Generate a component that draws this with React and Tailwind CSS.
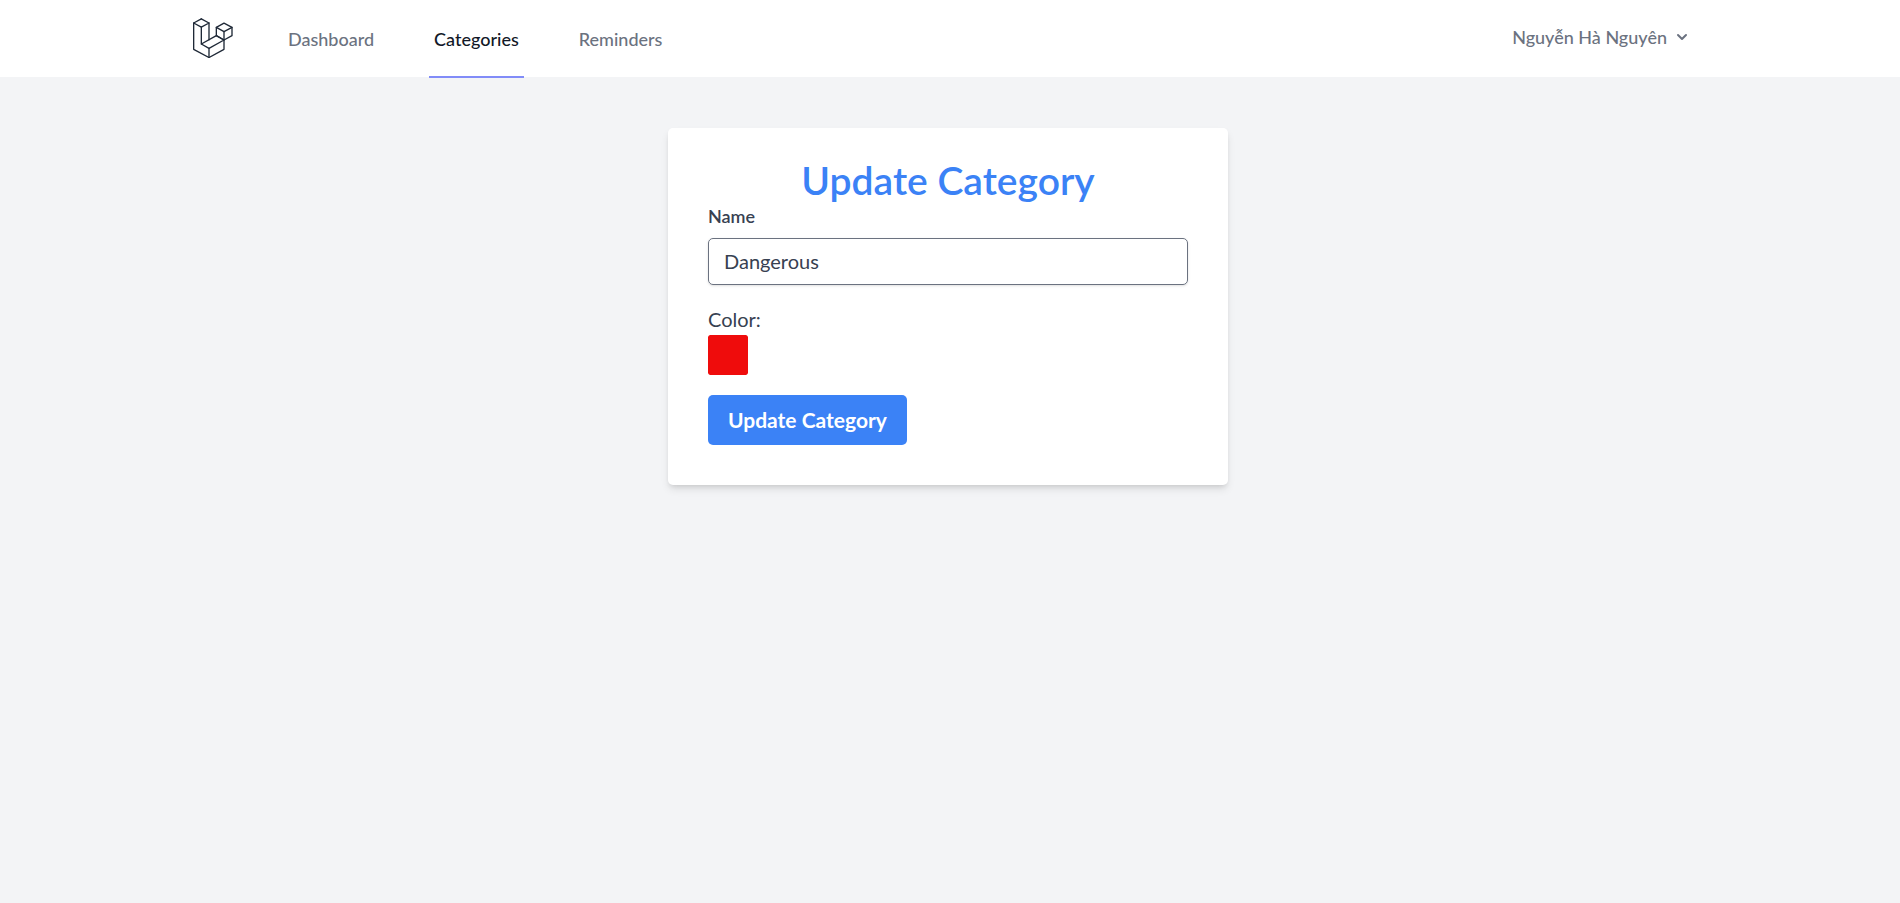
import React, { useState } from "react";

const links = [
  { label: "Dashboard", href: "#dashboard" },
  { label: "Categories", href: "#categories", active: true },
  { label: "Reminders", href: "#reminders" },
];

function Logo() {
  return (
    <svg
      viewBox="38 52 120 120"
      className="size-10 text-[#1f2937]"
      fill="none"
      stroke="currentColor"
      strokeWidth="4"
      strokeLinejoin="round"
      strokeLinecap="round"
      aria-hidden="true"
    >
      <path d="M63 54.5 40 67v79l46 24.500 45-24.500V93" />
      <path d="M40 67l23 12.500L86 67 63 54.500" />
      <path d="M63 79.500V130l23 13v27.500" />
      <path d="M86 67v50.500" />
      <path d="M63 130l45-25 23 13-45 25" />
      <path d="M131 67.500 108 80v25l23 13 24-13V80z" />
      <path d="M108 80l23 13 24-13" />
    </svg>
  );
}

function Header() {
  return (
    <nav className="border-b border-[#f3f4f6] bg-white pr-1">
      <div className="mx-auto flex max-w-[1600px] justify-between px-10">
        <div className="flex gap-[50px]">
          <a href="#home" aria-label="Home" className="flex items-center pl-[5px] pb-0.5">
            <Logo />
          </a>
          {links.map(({ label, href, active }) => (
            <a
              key={label}
              href={href}
              aria-current={active ? "page" : undefined}
              className={
                "-mb-px flex h-[78px] items-center border-b-2 px-[5px] pt-0.5 text-lg font-medium " +
                (active ? "border-[#818cf8] text-[#111827]" : "border-transparent text-[#6b7280]")
              }
            >
              {label}
            </a>
          ))}
        </div>
        <button type="button" className="flex items-center gap-[5px] pr-4 pb-1 text-lg font-medium text-[#6b7280]">
          Nguyễn Hà Nguyên
          <svg viewBox="0 0 20 20" className="size-5" fill="currentColor" aria-hidden="true">
            <path
              fillRule="evenodd"
              clipRule="evenodd"
              d="M5.293 7.293a1 1 0 011.414 0L10 10.586l3.293-3.293a1 1 0 111.414 1.414l-4 4a1 1 0 01-1.414 0l-4-4a1 1 0 010-1.414z"
            />
          </svg>
        </button>
      </div>
    </nav>
  );
}

function CategoryForm() {
  const [name, setName] = useState("Dangerous");
  const [color, setColor] = useState("#ef0c0c");
  return (
    <form
      onSubmit={(e) => e.preventDefault()}
      className="mx-auto flex w-full max-w-[560px] flex-col items-start rounded-[5px] bg-white p-10 text-[#374151] shadow-[0_5px_8px_-1px_rgb(0_0_0/0.1),0_3px_5px_-2px_rgb(0_0_0/0.1)]"
    >
      <h1 className="w-full text-center text-[39px] leading-6 font-semibold text-[#3b82f6]">Update Category</h1>
      <label htmlFor="name" className="mt-3 text-lg leading-6 font-semibold">
        Name
      </label>
      <input
        id="name"
        type="text"
        value={name}
        onChange={(e) => setName(e.target.value)}
        className="mt-[10px] h-[47px] w-full rounded-[5px] border border-[#6b7280] px-[15px] pb-0.5 text-xl shadow-sm"
      />
      <label htmlFor="color" className="mt-5 mb-0.5 text-xl leading-7">
        Color:
      </label>
      <input
        id="color"
        type="color"
        value={color}
        onChange={(e) => setColor(e.target.value)}
        className="size-10 appearance-none rounded-[2px] border-0 p-0 [&::-webkit-color-swatch]:rounded-[2px] [&::-webkit-color-swatch]:border-0 [&::-webkit-color-swatch-wrapper]:p-0"
      />
      <button
        type="submit"
        className="mt-5 rounded-[5px] bg-[#3b82f6] px-5 py-[10px] text-[21px] leading-[30px] font-bold text-white"
      >
        Update Category
      </button>
    </form>
  );
}

export default function App() {
  return (
    <div className="min-h-screen bg-[#f3f4f6] font-['Lato',sans-serif]">
      <Header />
      <main className="py-[50px] pr-1">
        <CategoryForm />
      </main>
    </div>
  );
}
